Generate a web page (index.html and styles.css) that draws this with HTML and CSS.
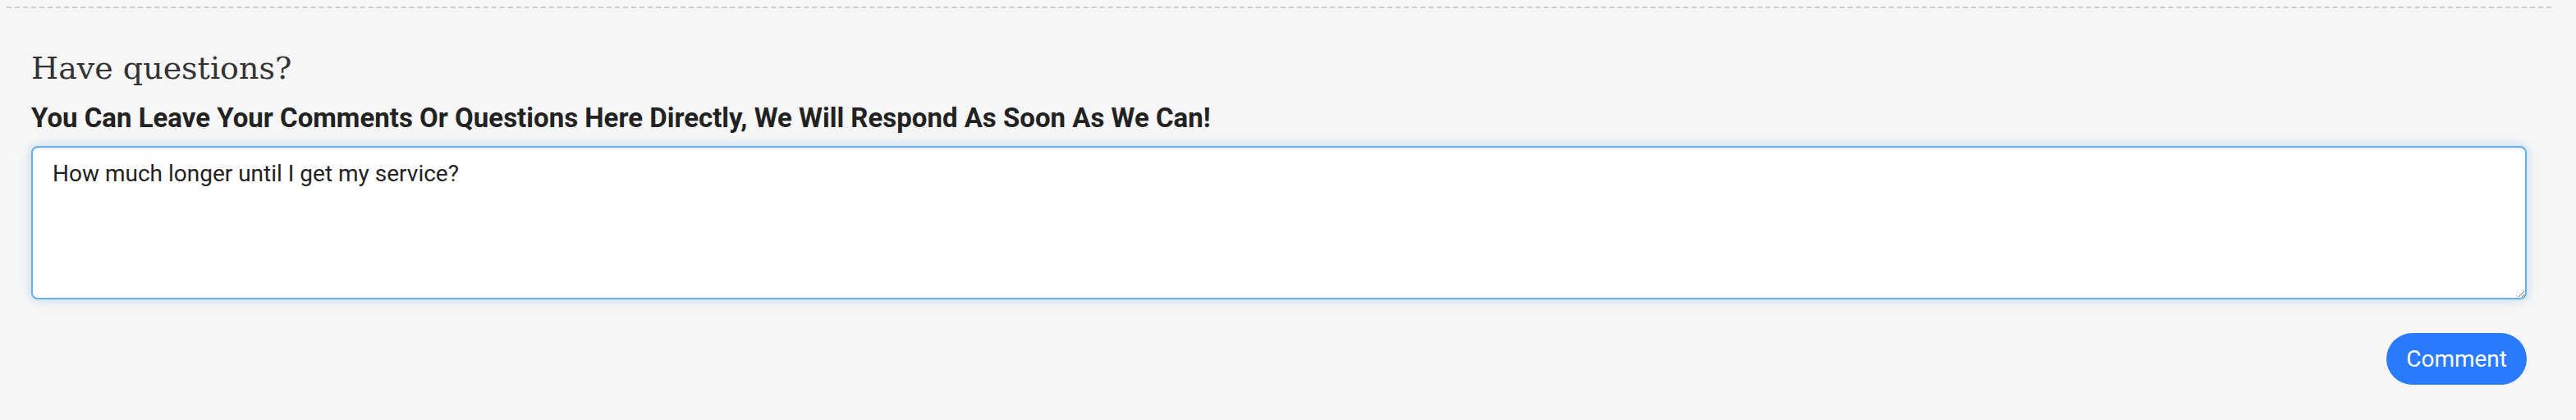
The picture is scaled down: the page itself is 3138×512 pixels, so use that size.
FILE: index.html
```html
<!DOCTYPE html>
<html lang="en">
<head>
<meta charset="utf-8">
<title>Have questions?</title>
<link rel="stylesheet" href="styles.css">
</head>
<body>
  <section class="comments">
    <h3 class="comments-title">Have questions?</h3>
    <h4 class="comments-subtitle">You Can Leave Your Comments Or Questions Here Directly, We Will Respond As Soon As We Can!</h4>
    <textarea class="comments-input" id="comment-input">How much longer until I get my service?</textarea>
    <div class="comments-actions">
      <button class="btn-comment" type="button">Comment</button>
    </div>
  </section>
  <script src="script.js"></script>
</body>
</html>
```

FILE: styles.css
```css
html, body {
  margin: 0;
  padding: 0;
  background: #f6f6f6;
  height: 512px;
  overflow: hidden;
}

.comments {
  box-sizing: border-box;
  margin: 8px 0 0 8px;
  width: 3100px;
  border-top: 2px dashed #cccccc;
  padding: 49px 30px 0 30px;
  display: flex;
  flex-direction: column;
}

.comments-title {
  margin: 0;
  font-family: "DejaVu Serif", serif;
  font-weight: normal;
  font-size: 38px;
  line-height: 48px;
  color: #333333;
}

.comments-subtitle {
  margin: 17px 0 0 0;
  font-family: Roboto, "Liberation Sans", sans-serif;
  font-weight: 700;
  font-size: 33px;
  line-height: 40px;
  color: #222222;
}

.comments-input {
  box-sizing: border-box;
  margin: 14px 0 0 0;
  width: 100%;
  height: 187px;
  padding: 12px 24px;
  border: 2px solid #66afe9;
  border-radius: 8px;
  background: #ffffff;
  font-family: Roboto, "Liberation Sans", sans-serif;
  font-size: 28px;
  line-height: 40px;
  color: #222222;
  caret-color: #000000;
  outline: none;
  box-shadow: inset 0 2px 2px rgba(0, 0, 0, 0.075), 0 0 12px rgba(102, 175, 233, 0.45);
}

.comments-actions {
  display: flex;
  justify-content: flex-end;
  margin-top: 41px;
}

.btn-comment {
  border: none;
  border-radius: 32px;
  background: #2b7bff;
  color: #ffffff;
  font-family: Roboto, "Liberation Sans", sans-serif;
  font-size: 28px;
  line-height: 39px;
  padding: 12px 24px;
  cursor: pointer;
}
```

FILE: script.js
```js
var input = document.getElementById('comment-input');
input.focus();
var end = input.value.length;
input.setSelectionRange(end, end);
```
